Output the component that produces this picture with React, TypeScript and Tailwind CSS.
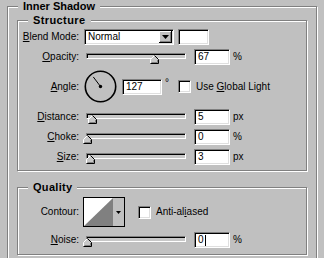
import React from "react";

const sunken =
  "bg-white border border-t-[#808080] border-l-[#808080] border-r-white border-b-white shadow-[inset_1px_1px_0_#000,inset_-1px_-1px_0_#dfdfdf]";

function Thumb() {
  return (
    <svg width="9" height="9" viewBox="0 0 9 9">
      <path d="M0.5 8.5 V4.5 L4.5 0.5 L8.5 4.5 V8.5 Z" fill="#c8c8c8" />
      <path d="M0.5 8 V4.5 L4.5 0.5" stroke="#ffffff" fill="none" />
      <path d="M4.5 0.5 L8.5 4.5 V8.5 H0.5" stroke="#000" fill="none" />
      <path d="M1.5 7.5 H7.5 V5" stroke="#808080" fill="none" />
    </svg>
  );
}

function Slider({ value }: { value: number }) {
  return (
    <div className="relative w-[104px] h-[16px] shrink-0">
      <div className="mx-[2px] mt-[4px] w-[100px] h-[6px] bg-[#c8c8c8] border border-t-[#808080] border-l-[#808080] border-r-white border-b-white shadow-[inset_1px_1px_0_#000]" />
      <div className="absolute top-[6px] leading-none" style={{ left: value - 1 }}>
        <Thumb />
      </div>
    </div>
  );
}

function Field({ value, caret }: { value: string; caret?: boolean }) {
  return (
    <div className={`ml-[6px] w-[36px] h-[16px] pl-[3px] flex items-center ${sunken}`}>
      <span className="leading-none">{value}</span>
      {caret && <span className="w-[1px] h-[11px] bg-black ml-[1px]" />}
    </div>
  );
}

function Label({ children }: { children: React.ReactNode }) {
  return <div className="w-[61px] shrink-0 text-right leading-none">{children}</div>;
}

function SliderRow({
  label,
  value,
  unit,
  className,
  caret,
}: {
  label: React.ReactNode;
  value: number;
  unit: string;
  className: string;
  caret?: boolean;
}) {
  return (
    <div className={`flex items-center h-[16px] ${className}`}>
      <Label>{label}</Label>
      <div className="ml-[5px] flex items-center">
        <Slider value={value} />
        <Field value={String(value)} caret={caret} />
        <span className="ml-[3px] leading-none">{unit}</span>
      </div>
    </div>
  );
}

function Checkbox() {
  return <div className={`w-[13px] h-[13px] shrink-0 ${sunken}`} />;
}

function Dial() {
  const a = (127 * Math.PI) / 180;
  const x2 = 16.5 + 12 * Math.cos(a);
  const y2 = 16.5 - 12 * Math.sin(a);
  return (
    <svg width="33" height="33" viewBox="0 0 33 33" className="shrink-0">
      <circle cx="16.5" cy="16.5" r="15.2" stroke="#000" strokeWidth="1.6" fill="none" />
      <line x1="16.5" y1="16.5" x2={x2} y2={y2} stroke="#000" strokeWidth="1" />
      <circle cx="16.5" cy="16.5" r="1.7" fill="#000" />
    </svg>
  );
}

export default function App() {
  return (
    <div className="w-[324px] h-[258px] overflow-hidden bg-[#c0c0c0] text-black text-[10px] font-['Liberation_Sans',Arial,sans-serif]">
      <fieldset className="ml-[7px] w-[310px] border border-[#808080] shadow-[inset_1px_1px_0_#fff,1px_1px_0_#fff] pb-[12px]">
        <legend className="ml-[10px] px-[5px] bg-[#c0c0c0] text-[11px] font-bold leading-[13px]">
          Inner Shadow
        </legend>
        <div className="px-[9px]">
          {/* Structure */}
          <fieldset className="mt-[1px] w-[290px] border border-[#808080] shadow-[inset_1px_1px_0_#fff,1px_1px_0_#fff]">
            <legend className="ml-[10px] px-[5px] bg-[#c0c0c0] text-[11px] font-bold leading-[13px] tracking-[0.4px]">
              Structure
            </legend>
            <div className="flex flex-col pt-[2px] pb-[5px]">
              <div className="flex items-center h-[16px]">
                <Label>
                  <span className="underline">B</span>lend Mode:
                </Label>
                <div className={`ml-[5px] w-[90px] h-[16px] flex items-center ${sunken}`}>
                  <span className="flex-1 pl-[3px] leading-none">Normal</span>
                  <div className="mr-[1px] w-[13px] h-[12px] bg-[#c0c0c0] flex items-center justify-center shadow-[inset_-1px_-1px_0_#000,inset_1px_1px_0_#fff,inset_-2px_-2px_0_#808080]">
                    <svg width="7" height="4" viewBox="0 0 7 4">
                      <path d="M0 0 H7 L3.5 4 Z" fill="#000" />
                    </svg>
                  </div>
                </div>
                <div className={`ml-[4px] w-[31px] h-[16px] ${sunken}`} />
              </div>

              <SliderRow
                className="mt-[4px]"
                label={
                  <>
                    <span className="underline">O</span>pacity:
                  </>
                }
                value={67}
                unit="%"
              />

              <div className="mt-[5px] flex items-center h-[33px]">
                <Label>
                  <span className="underline">A</span>ngle:
                </Label>
                <div className="ml-[5px]">
                  <Dial />
                </div>
                <div className={`ml-[5px] w-[40px] h-[16px] pl-[3px] flex items-center ${sunken}`}>
                  <span className="leading-none">127</span>
                </div>
                <span className="ml-[3px] self-start mt-[8px] leading-none">°</span>
                <div className="ml-[9px]">
                  <Checkbox />
                </div>
                <span className="ml-[5px] leading-none">
                  Use <span className="underline">G</span>lobal Light
                </span>
              </div>

              <SliderRow
                className="mt-[6px]"
                label={
                  <>
                    <span className="underline">D</span>istance:
                  </>
                }
                value={5}
                unit="px"
              />
              <SliderRow
                className="mt-[4px]"
                label={
                  <>
                    <span className="underline">C</span>hoke:
                  </>
                }
                value={0}
                unit="%"
              />
              <SliderRow
                className="mt-[4px]"
                label={
                  <>
                    <span className="underline">S</span>ize:
                  </>
                }
                value={3}
                unit="px"
              />
            </div>
          </fieldset>

          {/* Quality */}
          <fieldset className="mt-[10px] w-[290px] border border-[#808080] shadow-[inset_1px_1px_0_#fff,1px_1px_0_#fff]">
            <legend className="ml-[10px] px-[5px] bg-[#c0c0c0] text-[11px] font-bold leading-[13px] tracking-[0.3px]">
              Quality
            </legend>
            <div className="flex flex-col pt-[3px] pb-[6px]">
              <div className="flex items-center h-[30px]">
                <Label>Contour:</Label>
                <div className="ml-[4px] flex w-[42px] h-[30px] border border-black">
                  <svg width="29" height="28" viewBox="0 0 29 28" className="shrink-0">
                    <rect x="0" y="0" width="29" height="28" fill="#fff" />
                    <path d="M0 28 L29 0 V28 Z" fill="#808080" />
                  </svg>
                  <div className="flex-1 bg-[#c0c0c0] flex items-center justify-center">
                    <svg width="5" height="3" viewBox="0 0 5 3">
                      <path d="M0 0 H5 L2.5 3 Z" fill="#000" />
                    </svg>
                  </div>
                </div>
                <div className="ml-[13px]">
                  <Checkbox />
                </div>
                <span className="ml-[5px] leading-none">
                  Anti-al<span className="underline">i</span>ased
                </span>
              </div>
              <SliderRow
                className="mt-[5px]"
                label={
                  <>
                    <span className="underline">N</span>oise:
                  </>
                }
                value={0}
                unit="%"
                caret
              />
            </div>
          </fieldset>
        </div>
      </fieldset>
    </div>
  );
}
